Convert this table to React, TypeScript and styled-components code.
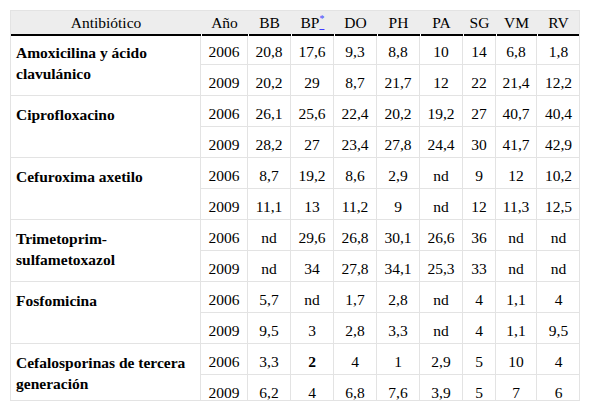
import styled, { createGlobalStyle } from "styled-components";

const GlobalStyle = createGlobalStyle`
    body {
        margin: 0;
        background: #fff;
        font-family: "Liberation Serif", "Times New Roman", serif;
        color: #000;
    }
`;

const Page = styled.div`
    padding: 10px;
`;

const Frame = styled.div`
    width: 570px;
    height: 391px;
    box-sizing: border-box;
    border: 1px solid #e3e3e3;
    border-top: none;
    overflow: hidden;
`;

const Table = styled.table`
    width: 100%;
    table-layout: fixed;
    border-collapse: separate;
    border-spacing: 0;
    font-family: "Liberation Serif", "Times New Roman", serif;
    font-size: 15.5px;
    color: #000;
`;

const Th = styled.th<{ $first?: boolean }>`
    position: relative;
    height: 21px;
    padding: 0;
    background: #ededed;
    border-top: 1px solid #e3e3e3;
    font-weight: normal;
    text-align: center;
    line-height: 21px;
    white-space: nowrap;

    &::after {
        content: "";
        position: absolute;
        left: ${(p) => (p.$first ? "0" : "1px")};
        right: 0;
        bottom: -2px;
        height: 2px;
        background: #000;
    }
`;

const Head = styled.thead`
    tr {
        height: 24px;
    }
`;

const Row = styled.tr`
    height: 31px;
`;

const NameCell = styled.td`
    padding: 8px 5px 0;
    vertical-align: top;
    font-family: "Liberation Serif", "Times New Roman", serif;
    font-weight: 700;
    line-height: 21px;
    border-right: 1px solid #e3e3e3;
    border-bottom: 1px solid #e3e3e3;
`;

const Cell = styled.td<{ $last?: boolean }>`
    padding: 4px 0 0;
    text-align: center;
    vertical-align: middle;
    line-height: 21px;
    white-space: nowrap;
    border-right: ${(p) => (p.$last ? "none" : "1px solid #e3e3e3")};
    border-bottom: 1px solid #e3e3e3;
`;

const Ref = styled.a`
    color: #3d3dff;
    text-decoration: underline;

    sup {
        font-size: 10px;
        line-height: 0;
    }
`;

const widths = [190, 47, 43, 43, 43, 43, 43, 33, 41, 43];
const columns = ["Año", "BB", "BP", "DO", "PH", "PA", "SG", "VM", "RV"];

type Group = {
    name: string;
    rows: [string, string[]][];
};

const groups: Group[] = [
    {
        name: "Amoxicilina y ácido clavulánico",
        rows: [
            ["2006", ["20,8", "17,6", "9,3", "8,8", "10", "14", "6,8", "1,8"]],
            ["2009", ["20,2", "29", "8,7", "21,7", "12", "22", "21,4", "12,2"]],
        ],
    },
    {
        name: "Ciprofloxacino",
        rows: [
            ["2006", ["26,1", "25,6", "22,4", "20,2", "19,2", "27", "40,7", "40,4"]],
            ["2009", ["28,2", "27", "23,4", "27,8", "24,4", "30", "41,7", "42,9"]],
        ],
    },
    {
        name: "Cefuroxima axetilo",
        rows: [
            ["2006", ["8,7", "19,2", "8,6", "2,9", "nd", "9", "12", "10,2"]],
            ["2009", ["11,1", "13", "11,2", "9", "nd", "12", "11,3", "12,5"]],
        ],
    },
    {
        name: "Trimetoprim-sulfametoxazol",
        rows: [
            ["2006", ["nd", "29,6", "26,8", "30,1", "26,6", "36", "nd", "nd"]],
            ["2009", ["nd", "34", "27,8", "34,1", "25,3", "33", "nd", "nd"]],
        ],
    },
    {
        name: "Fosfomicina",
        rows: [
            ["2006", ["5,7", "nd", "1,7", "2,8", "nd", "4", "1,1", "4"]],
            ["2009", ["9,5", "3", "2,8", "3,3", "nd", "4", "1,1", "9,5"]],
        ],
    },
    {
        name: "Cefalosporinas de tercera generación",
        rows: [
            ["2006", ["3,3", "**2", "4", "1", "2,9", "5", "10", "4"]],
            ["2009", ["6,2", "4", "6,8", "7,6", "3,9", "5", "7", "6"]],
        ],
    },
];

function Value({ v }: { v: string }) {
    // "**" al inicio marca un valor en negrita
    if (v.startsWith("**")) return <b>{v.slice(2)}</b>;
    return <>{v}</>;
}

export default function App() {
    return (
        <Page>
            <GlobalStyle />
            <Frame>
                <Table>
                    <colgroup>
                        {widths.map((w, i) => (
                            <col key={i} style={{ width: w }} />
                        ))}
                    </colgroup>
                    <Head>
                        <tr>
                            <Th $first>Antibiótico</Th>
                            {columns.map((c) => (
                                <Th key={c}>
                                    {c}
                                    {c === "BP" && (
                                        <Ref href="#">
                                            <sup>*</sup>
                                        </Ref>
                                    )}
                                </Th>
                            ))}
                        </tr>
                    </Head>
                    <tbody>
                        {groups.map((g) =>
                            g.rows.map(([year, vals], ri) => (
                                <Row key={g.name + year}>
                                    {ri === 0 && <NameCell rowSpan={2}>{g.name}</NameCell>}
                                    <Cell>{year}</Cell>
                                    {vals.map((v, i) => (
                                        <Cell key={i} $last={i === vals.length - 1}>
                                            <Value v={v} />
                                        </Cell>
                                    ))}
                                </Row>
                            )),
                        )}
                    </tbody>
                </Table>
            </Frame>
        </Page>
    );
}
